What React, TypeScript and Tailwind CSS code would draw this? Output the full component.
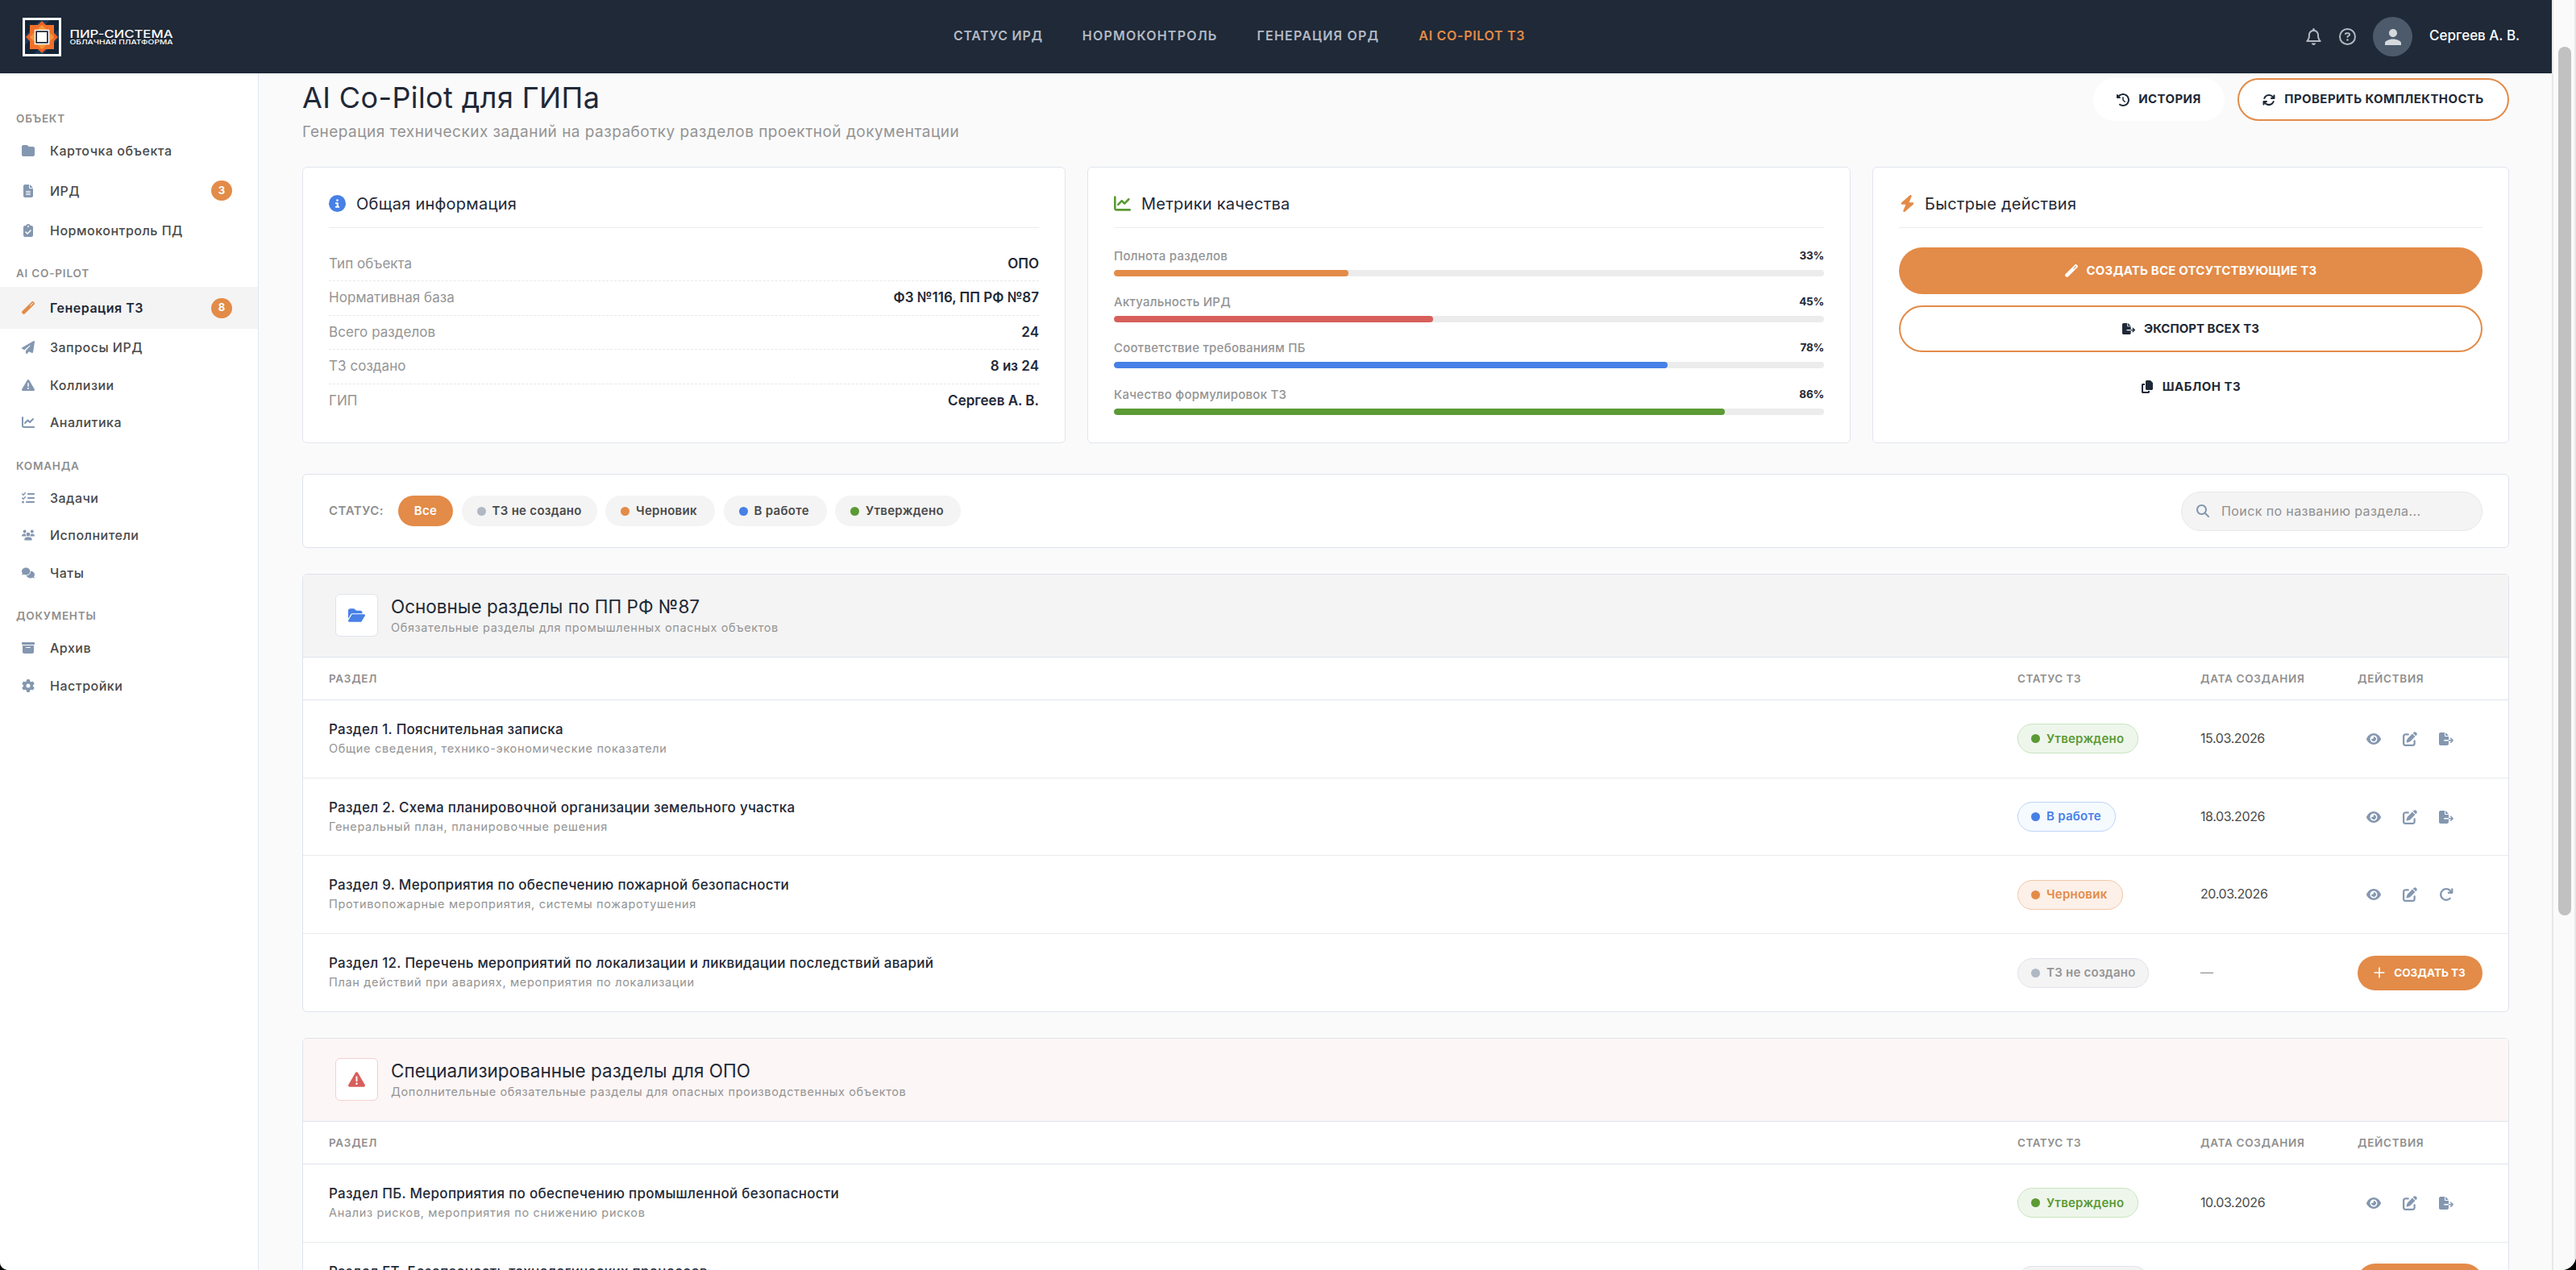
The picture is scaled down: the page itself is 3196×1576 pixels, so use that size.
import type { ReactNode } from "react";
import type { IconType } from "react-icons";
import { Plus } from "lucide-react";
import {
  FaArrowRotateRight,
  FaArrowsRotate,
  FaBolt,
  FaBoxArchive,
  FaChartLine,
  FaCircleInfo,
  FaClipboardCheck,
  FaClockRotateLeft,
  FaComments,
  FaCopy,
  FaEye,
  FaFileExport,
  FaFileLines,
  FaFolder,
  FaFolderOpen,
  FaGear,
  FaListCheck,
  FaMagnifyingGlass,
  FaPaperPlane,
  FaPenToSquare,
  FaRegBell,
  FaRegCircleQuestion,
  FaTriangleExclamation,
  FaUsers,
  FaWandMagic,
} from "react-icons/fa6";
import { MdPerson } from "react-icons/md";

type NavItem = { label: string; icon: IconType; badge?: number; active?: boolean };
type Status = "approved" | "progress" | "draft" | "none";
type Row = { title: string; text: string; status: Status; date: string };

const navGroups: { title: string; items: NavItem[] }[] = [
  {
    title: "ОБЪЕКТ",
    items: [
      { label: "Карточка объекта", icon: FaFolder },
      { label: "ИРД", icon: FaFileLines, badge: 3 },
      { label: "Нормоконтроль ПД", icon: FaClipboardCheck },
    ],
  },
  {
    title: "AI CO-PILOT",
    items: [
      { label: "Генерация ТЗ", icon: FaWandMagic, badge: 8, active: true },
      { label: "Запросы ИРД", icon: FaPaperPlane },
      { label: "Коллизии", icon: FaTriangleExclamation },
      { label: "Аналитика", icon: FaChartLine },
    ],
  },
  {
    title: "КОМАНДА",
    items: [
      { label: "Задачи", icon: FaListCheck },
      { label: "Исполнители", icon: FaUsers },
      { label: "Чаты", icon: FaComments },
    ],
  },
  {
    title: "ДОКУМЕНТЫ",
    items: [
      { label: "Архив", icon: FaBoxArchive },
      { label: "Настройки", icon: FaGear },
    ],
  },
];

const info = [
  ["Тип объекта", "ОПО"],
  ["Нормативная база", "ФЗ №116, ПП РФ №87"],
  ["Всего разделов", "24"],
  ["ТЗ создано", "8 из 24"],
  ["ГИП", "Сергеев А. В."],
];

const metrics = [
  { label: "Полнота разделов", value: 33, color: "bg-[#e38b48]" },
  { label: "Актуальность ИРД", value: 45, color: "bg-[#d75f5b]" },
  { label: "Соответствие требованиям ПБ", value: 78, color: "bg-[#4780e6]" },
  { label: "Качество формулировок ТЗ", value: 86, color: "bg-[#5b9a34]" },
];

const statuses: Record<Status, { label: string; dot: string; badge: string; width: string }> = {
  none: { label: "ТЗ не создано", dot: "bg-[#b0b8c4]", badge: "border-[#dfe3ec] bg-[#f4f4f4] text-[#949494]", width: "w-[163px]" },
  draft: { label: "Черновик", dot: "bg-[#e38b48]", badge: "border-[#f3c7a5] bg-[#fcf0e8] text-[#e38b48]", width: "w-[131px]" },
  progress: { label: "В работе", dot: "bg-[#4780e6]", badge: "border-[#bcd3f6] bg-[#f5faff] text-[#4780e6]", width: "w-[122px]" },
  approved: { label: "Утверждено", dot: "bg-[#5b9a34]", badge: "border-[#c6e4bd] bg-[#eef6ec] text-[#5b9a34]", width: "w-[150px]" },
};

const filters: { status: Status; width: string }[] = [
  { status: "none", width: "w-[168px]" },
  { status: "draft", width: "w-[136px]" },
  { status: "progress", width: "w-[128px]" },
  { status: "approved", width: "w-[156px]" },
];

const mainRows: Row[] = [
  { title: "Раздел 1. Пояснительная записка", text: "Общие сведения, технико-экономические показатели", status: "approved", date: "15.03.2026" },
  { title: "Раздел 2. Схема планировочной организации земельного участка", text: "Генеральный план, планировочные решения", status: "progress", date: "18.03.2026" },
  { title: "Раздел 9. Мероприятия по обеспечению пожарной безопасности", text: "Противопожарные мероприятия, системы пожаротушения", status: "draft", date: "20.03.2026" },
  { title: "Раздел 12. Перечень мероприятий по локализации и ликвидации последствий аварий", text: "План действий при авариях, мероприятия по локализации", status: "none", date: "—" },
];

const specialRows: Row[] = [
  { title: "Раздел ПБ. Мероприятия по обеспечению промышленной безопасности", text: "Анализ рисков, мероприятия по снижению рисков", status: "approved", date: "10.03.2026" },
  { title: "Раздел БТ. Безопасность технологических процессов", text: "Технологические решения, безопасность процессов", status: "none", date: "—" },
];

function Logo() {
  return (
    <svg width="188" height="48" viewBox="0 0 188 48">
      <rect x="1.5" y="1.5" width="45" height="45" fill="#142436" stroke="#fff" strokeWidth="3" />
      <path d="M3 22 22 3H34L3 34ZM45 26 26 45H14L45 14Z" fill="#1f4a6e" opacity="0.6" />
      <path d="M24 4 44 24 24 44 4 24Z" fill="#ee5f27" />
      <rect x="9" y="9" width="30" height="30" fill="#f0702a" />
      <path d="M24 9 39 24 24 39 9 24Z" fill="#f09a3c" />
      <rect x="15.5" y="15.5" width="17" height="17" fill="#1f2937" stroke="#fff" strokeWidth="1.5" />
      <rect x="18" y="18" width="12" height="12" fill="#fff" />
      <text x="58.5" y="24.5" textLength="128" lengthAdjust="spacingAndGlyphs" fill="#fff" fontSize="12.5" fontWeight="500" fontFamily="Inter, sans-serif">
        ПИР-СИСТЕМА
      </text>
      <text x="58.5" y="32.5" textLength="128" lengthAdjust="spacingAndGlyphs" fill="#fff" fontSize="7.5" fontWeight="500" fontFamily="Inter, sans-serif">
        ОБЛАЧНАЯ ПЛАТФОРМА
      </text>
    </svg>
  );
}

function Header() {
  return (
    <header className="flex h-[91px] shrink-0 items-center bg-[#1f2937]">
      <div className="w-[1155px] pl-7">
        <Logo />
      </div>
      <nav className="flex flex-1 gap-[49px] pb-[3px] pl-7 text-base leading-5 font-semibold whitespace-nowrap text-[#b3b9c4]">
        <span className="tracking-[0.7px]">СТАТУС ИРД</span>
        <span className="tracking-[1.2px]">НОРМОКОНТРОЛЬ</span>
        <span className="tracking-[1.2px]">ГЕНЕРАЦИЯ ОРД</span>
        <span className="tracking-[0.7px] text-[#e38b48]">AI CO-PILOT ТЗ</span>
      </nav>
      <div className="flex w-[306px] items-center text-[#b3b9c4]">
        <FaRegBell className="mr-[21px] h-[21px] w-auto" />
        <FaRegCircleQuestion className="mr-[21px] size-[21px]" />
        <div className="mr-[21px] flex size-[49px] items-center justify-center rounded-full bg-[#4c5a6c]">
          <MdPerson className="size-[30px] text-[#d5d9dd]" />
        </div>
        <span className="pb-[2px] text-[17px] font-medium whitespace-nowrap text-white">Сергеев А. В.</span>
      </div>
    </header>
  );
}

function Sidebar() {
  return (
    <aside className="w-[321px] shrink-0 border-r border-[#e1e5ee] bg-white pt-[26px]">
      {navGroups.map((group) => (
        <div key={group.title}>
          <div className="flex h-[47px] items-center pt-[14px] pl-5 text-[13.5px] font-semibold tracking-[0.8px] text-[#8f8f8f]">
            {group.title}
          </div>
          {group.items.map((item) => (
            <div
              key={item.label}
              className={`flex items-center pr-8 pl-[26px] text-base font-medium ${item.badge ? "h-[52px]" : "h-[46.5px]"} ${
                item.active ? "bg-[#f4f4f4] text-[#1f2937]" : "text-[#4a4a4a]"
              }`}
            >
              <span className="mr-[19px] flex w-[17px] justify-center">
                <item.icon className={`h-4 w-auto shrink-0 ${item.active ? "text-[#e38b48]" : "text-[#8497b0]"}`} />
              </span>
              <span className={`tracking-[0.5px] ${item.active ? "font-semibold" : ""}`}>{item.label}</span>
              {item.badge && (
                <span className="ml-auto flex h-[25px] w-[26px] items-center justify-center rounded-full bg-[#e38b48] text-[13px] font-bold text-white">
                  {item.badge}
                </span>
              )}
            </div>
          ))}
        </div>
      ))}
    </aside>
  );
}

function Card({ title, icon, children }: { title: string; icon: ReactNode; children: ReactNode }) {
  return (
    <div className="flex h-[343px] flex-col rounded-md border border-[#e1e5ee] bg-white px-8 pt-8">
      <div className="flex h-[43px] items-start border-b border-[#e9ebee]">
        <span className="mr-[13px] flex h-6 items-center">{icon}</span>
        <h2 className="pt-px text-[20px] leading-6 tracking-[0.25px] text-[#1f2937]">{title}</h2>
      </div>
      {children}
    </div>
  );
}

function StatusBadge({ status }: { status: Status }) {
  const s = statuses[status];
  return (
    <span className={`flex h-[37px] items-center rounded-full border pl-4 text-[15px] font-semibold tracking-[0.25px] whitespace-nowrap ${s.badge} ${s.width}`}>
      <span className={`mr-2 size-[11px] rounded-full ${s.dot}`} />
      {s.label}
    </span>
  );
}

function SectionTable({ title, subtitle, danger, rows }: { title: string; subtitle: string; danger?: boolean; rows: Row[] }) {
  return (
    <section className="mb-8 overflow-hidden rounded-md border border-[#dfe3ec] bg-white">
      <div className={`flex h-[103px] items-center border-b border-[#dfe3ec] pb-px pl-10 ${danger ? "bg-[#fdf6f6]" : "bg-[#f4f4f4]"}`}>
        <div className={`mr-4 flex size-[53px] items-center justify-center rounded-md border bg-white ${danger ? "border-[#f3cfce]" : "border-[#dfe3ec]"}`}>
          {danger ? <FaTriangleExclamation className="h-[21px] w-auto text-[#d75f5b]" /> : <FaFolderOpen className="h-[21px] w-auto text-[#4780e6]" />}
        </div>
        <div className="pt-[3px]">
          <h2 className="text-[22.5px] leading-7 text-[#1f2937]">{title}</h2>
          <p className="text-[14.5px] leading-6 tracking-[0.6px] text-[#949494]">{subtitle}</p>
        </div>
      </div>
      <div className="flex h-[53px] items-center border-b border-[#dfe3ec] pl-8 text-[13.5px] font-semibold tracking-[0.7px] text-[#8f8f8f]">
        <span className="w-[2095px]">РАЗДЕЛ</span>
        <span className="w-[227px] tracking-[0.5px]">СТАТУС ТЗ</span>
        <span className="w-[195px]">ДАТА СОЗДАНИЯ</span>
        <span>ДЕЙСТВИЯ</span>
      </div>
      {rows.map((row) => (
        <div key={row.title} className="flex h-[96.7px] items-center border-b border-[#e9ebee] pl-8 last:h-[96px] last:border-b-0">
          <div className="w-[2095px]">
            <p className="text-[17px] leading-6 font-medium tracking-[0.27px] text-[#1f2937]">{row.title}</p>
            <p className="text-[14.5px] leading-6 tracking-[0.67px] text-[#949494]">{row.text}</p>
          </div>
          <div className="w-[227px]">
            <StatusBadge status={row.status} />
          </div>
          <span className={`w-[195px] pb-[2px] text-base tracking-[-0.4px] ${row.status === "none" ? "text-[#949494]" : "text-[#4a4a4a]"}`}>{row.date}</span>
          {row.status === "none" ? (
            <button className="flex h-[43px] w-[155px] items-center justify-center gap-2 rounded-full bg-[#e38b48] pr-1 text-[13.5px] font-bold whitespace-nowrap text-white">
              <Plus className="size-5" strokeWidth={2} />
              СОЗДАТЬ ТЗ
            </button>
          ) : (
            <div className="flex gap-[5px] text-[#8497b0]">
              {[FaEye, FaPenToSquare, row.status === "draft" ? FaArrowRotateRight : FaFileExport].map((Icon, i) => (
                <span key={i} className="flex size-10 items-center justify-center">
                  <Icon className="h-[18px] w-auto" />
                </span>
              ))}
            </div>
          )}
        </div>
      ))}
    </section>
  );
}

function Main() {
  return (
    <main className="flex-1 overflow-hidden bg-[#fafafa] px-[54px] pt-1">
      <div className="flex h-28 w-[2738px] items-start justify-between">
        <div>
          <h1 className="-mt-[2px] text-[36px] leading-[56px] tracking-[0.4px] whitespace-nowrap text-[#1f2937]">AI Co-Pilot для ГИПа</h1>
          <p className="-mt-px text-[19px] leading-8 tracking-[0.48px] text-[#949494]">Генерация технических заданий на разработку разделов проектной документации</p>
        </div>
        <div className="flex gap-4 pt-[2px] text-[15px] font-bold tracking-[0.4px] whitespace-nowrap text-[#1f2937]">
          <button className="flex h-[53px] w-[163px] items-center justify-center gap-[11px] rounded-full bg-white">
            <FaClockRotateLeft className="size-4" />
            ИСТОРИЯ
          </button>
          <button className="flex h-[53px] w-[337px] items-center justify-center gap-[11px] rounded-full border-2 border-[#e38b48] bg-white">
            <FaArrowsRotate className="size-4" />
            ПРОВЕРИТЬ КОМПЛЕКТНОСТЬ
          </button>
        </div>
      </div>

      <div className="mb-[38px] grid grid-cols-[947px_947px_790px] gap-[27px]">
        <Card title="Общая информация" icon={<FaCircleInfo className="size-[21px] text-[#4780e6]" />}>
          <div className="pt-6">
            {info.map(([label, value]) => (
              <div key={label} className="flex h-[42.4px] items-center justify-between border-b border-dashed border-[#e6e8ec] text-[17px] last:border-b-0">
                <span className="tracking-[0.05px] text-[#949494]">{label}</span>
                <span className="font-semibold text-[#1f2937]">{value}</span>
              </div>
            ))}
          </div>
        </Card>

        <Card title="Метрики качества" icon={<FaChartLine className="size-[21px] text-[#5b9a34]" />}>
          <div className="pt-[23px]">
            {metrics.map((m) => (
              <div key={m.label} className="h-[57.2px]">
                <div className="flex h-[29px] items-start justify-between text-[15px] leading-[23px] font-medium tracking-[0.25px] text-[#949494]">
                  <span>{m.label}</span>
                  <span className="text-[13.5px] font-bold tracking-[-0.2px] text-[#1f2937]">{m.value}%</span>
                </div>
                <div className="h-2 overflow-hidden rounded-full bg-[#ececec]">
                  <div className={`h-2 rounded-full ${m.color}`} style={{ width: `${m.value}%` }} />
                </div>
              </div>
            ))}
          </div>
        </Card>

        <Card title="Быстрые действия" icon={<FaBolt className="-mr-[2px] h-[21px] w-auto text-[#e38b48]" />}>
          <div className="flex flex-col gap-[14.4px] pt-6 text-[15px] font-bold text-[#1f2937]">
            <button className="flex h-[57.6px] items-center justify-center gap-[11px] rounded-full bg-[#e38b48] tracking-[0.2px] text-white">
              <FaWandMagic className="size-4" />
              СОЗДАТЬ ВСЕ ОТСУТСТВУЮЩИЕ ТЗ
            </button>
            <button className="flex h-[57.6px] items-center justify-center gap-[11px] rounded-full border-2 border-[#e38b48]">
              <FaFileExport className="h-4 w-auto" />
              ЭКСПОРТ ВСЕХ ТЗ
            </button>
            <button className="flex h-[57.6px] items-center justify-center gap-[11px] tracking-[0.5px]">
              <FaCopy className="h-4 w-auto" />
              ШАБЛОН ТЗ
            </button>
          </div>
        </Card>
      </div>

      <div className="mb-8 flex h-[92px] w-[2738px] items-center rounded-md border border-[#dfe3ec] bg-white px-8 text-[15px] whitespace-nowrap">
        <span className="w-[86px] font-semibold tracking-[0.5px] text-[#8f8f8f]">СТАТУС:</span>
        <div className="flex flex-1 gap-[10.5px] font-semibold tracking-[0.3px] text-[#4a4a4a]">
          <span className="flex h-[38px] w-[68px] items-center justify-center rounded-full bg-[#e38b48] text-white">Все</span>
          {filters.map((f) => (
            <span key={f.status} className={`flex h-[38px] items-center rounded-full bg-[#f4f4f4] pl-[19px] ${f.width}`}>
              <span className={`mr-2 size-[11px] rounded-full ${statuses[f.status].dot}`} />
              {statuses[f.status].label}
            </span>
          ))}
        </div>
        <div className="flex h-[49px] w-[374px] items-center rounded-full border border-[#e6e8ec] bg-[#f4f4f4] pl-[18px] text-base tracking-[0.4px] text-[#8f8f8f]">
          <FaMagnifyingGlass className="mr-[15px] size-4 text-[#8497b0]" />
          Поиск по названию раздела...
        </div>
      </div>

      <div className="w-[2738px]">
        <SectionTable title="Основные разделы по ПП РФ №87" subtitle="Обязательные разделы для промышленных опасных объектов" rows={mainRows} />
        <SectionTable danger title="Специализированные разделы для ОПО" subtitle="Дополнительные обязательные разделы для опасных производственных объектов" rows={specialRows} />
      </div>
    </main>
  );
}

export default function App() {
  return (
    <div className="h-[1576px] w-[3196px] overflow-hidden bg-black font-['Inter','Noto_Sans',sans-serif]">
      <div className="flex h-full overflow-hidden rounded-br-[18px] rounded-bl-[10px] bg-[#fafafa]">
        <div className="flex w-[3166px] flex-col">
          <Header />
          <div className="flex min-h-0 flex-1">
            <Sidebar />
            <Main />
          </div>
        </div>
        {/* Scrollbar */}
        <div className="w-[30px] border-x-2 border-[#e8e8e8] bg-[#fafafa] pt-[58px] pl-[6px]">
          <div className="h-[1078px] w-4 rounded-full bg-[#c1c1c1]" />
        </div>
      </div>
    </div>
  );
}
